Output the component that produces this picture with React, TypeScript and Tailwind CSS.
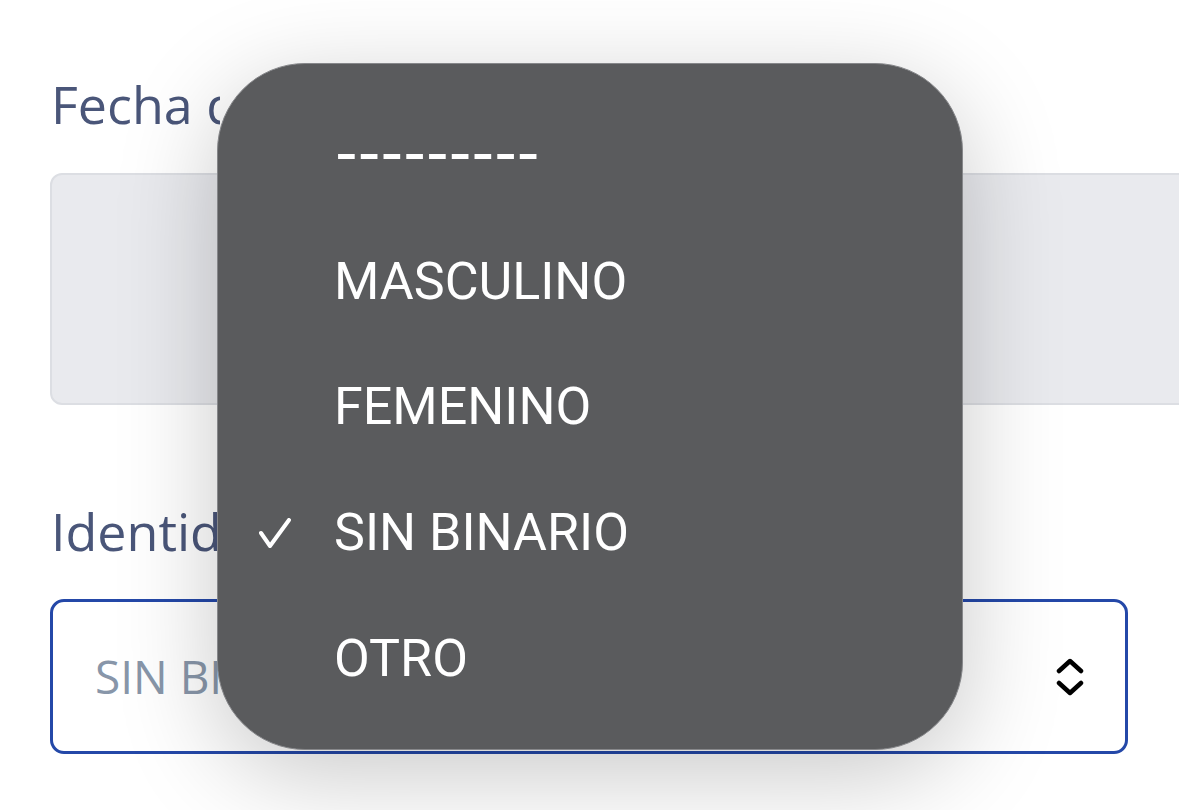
import React from "react";

const items = [
  { label: "---------", dash: true },
  { label: "MASCULINO" },
  { label: "FEMENINO" },
  { label: "SIN BINARIO", checked: true },
  { label: "OTRO" },
];

export default function App() {
  return (
    <div className="relative h-[810px] w-[1179px] overflow-hidden bg-white" style={{ fontFamily: '"Open Sans", "Noto Sans", sans-serif' }}>
      <div className="flex flex-col pl-[50px] pt-[73px]">
        <div className="h-[62px] w-[170px] overflow-hidden whitespace-nowrap pl-[1px] text-[52px] leading-[62px] text-[#4a5679]">
          Fecha de nacimiento
        </div>
        <div className="mt-[38px] h-[232px] w-[1200px] rounded-[12px] border-2 border-[#dcdee3] bg-[#e9eaee]" />
        <div className="mt-[95px] h-[62px] w-[170px] overflow-hidden whitespace-nowrap pl-[1px] text-[52px] leading-[62px] text-[#4a5679]">
          Identidad de género
        </div>
        <div className="mt-[37px] flex h-[155px] w-[1078px] items-center justify-between rounded-[14px] border-[3px] border-[#2448a8] bg-white pl-[42px] pr-[41px]">
          <span className="w-[125px] overflow-hidden whitespace-nowrap text-[46px] text-[#8896a9]">SIN BINARIO</span>
          <svg width="28" height="38" viewBox="0 0 28 38" fill="none" stroke="#000" strokeWidth="4.5" strokeLinecap="round" strokeLinejoin="round">
            <path d="M3 13 L14 3 L25 13" />
            <path d="M3 25 L14 35 L25 25" />
          </svg>
        </div>
      </div>

      <div className="absolute left-[217px] top-[63px] flex h-[687px] w-[746px] flex-col rounded-[88px] border border-[#86878a] bg-[#5a5b5d] pb-[27px] pt-[29px] shadow-[0_24px_100px_rgba(0,0,0,0.22)]">
        {items.map((it) => (
          <div key={it.label} className="flex h-[126px] items-center">
            <div className="flex w-[116px] shrink-0 items-center pl-[41px]">
              {it.checked && (
                <svg width="32" height="31" viewBox="0 0 32 31" fill="none" stroke="#fff" strokeWidth="4" strokeLinecap="round" strokeLinejoin="round">
                  <path d="M2 15 L11 28 L30 2" />
                </svg>
              )}
            </div>
            {it.dash ? (
              <span className="-translate-y-[3px] whitespace-nowrap pl-[1px] text-[63px] text-white" style={{ fontFamily: '"DejaVu Sans", sans-serif' }}>
                {it.label}
              </span>
            ) : (
              <span className="whitespace-nowrap text-[52px] text-white" style={{ fontFamily: 'Roboto, "Liberation Sans", sans-serif' }}>
                {it.label}
              </span>
            )}
          </div>
        ))}
      </div>
    </div>
  );
}
